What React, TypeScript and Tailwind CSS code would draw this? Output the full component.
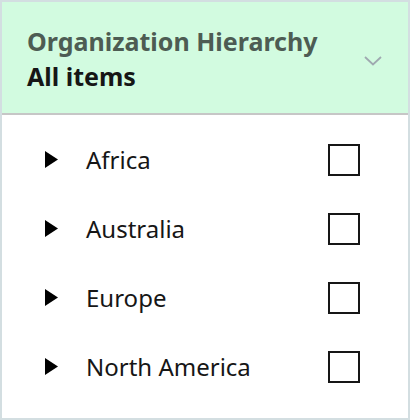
const regions = ['Africa', 'Australia', 'Europe', 'North America'];

function Caret() {
  return (
    <svg width="13" height="17" viewBox="0 0 13 17" className="shrink-0">
      <path d="M0 0 L13 8.5 L0 17 Z" fill="#000" />
    </svg>
  );
}

function Chevron() {
  return (
    <svg width="18" height="10" viewBox="0 0 18 10" fill="none" className="mt-[6px]">
      <path d="M1 1 L9 8.5 L17 1" stroke="#9fa9b0" strokeWidth="1.8" />
    </svg>
  );
}

export default function App() {
  return (
    <div
      className="w-[410px] h-[420px] border-2 border-[#d3dee1] bg-white flex flex-col"
      style={{ fontFamily: '"Noto Sans", Roboto, sans-serif' }}
    >
      <div className="h-[113px] shrink-0 bg-[#d2fbe0] border-b-2 border-[#c6c6c6] flex items-center pl-[25px] pr-[26px]">
        <div className="flex-1 flex flex-col pt-[2px]">
          <span className="text-[25px] leading-[35px] font-bold text-[#4d5c53]">Organization Hierarchy</span>
          <span className="text-[25px] leading-[35px] font-bold text-[#161616]">All items</span>
        </div>
        <Chevron />
      </div>
      <div className="flex flex-col pt-[10px]">
        {regions.map((r) => (
          <div key={r} className="h-[69px] flex items-center pl-[43px] pr-[48px]">
            <Caret />
            <span className="ml-[28px] flex-1 text-[24px] text-[#161616]">{r}</span>
            <div className="w-[32px] h-[32px] border-2 border-[#161616]" />
          </div>
        ))}
      </div>
    </div>
  );
}
